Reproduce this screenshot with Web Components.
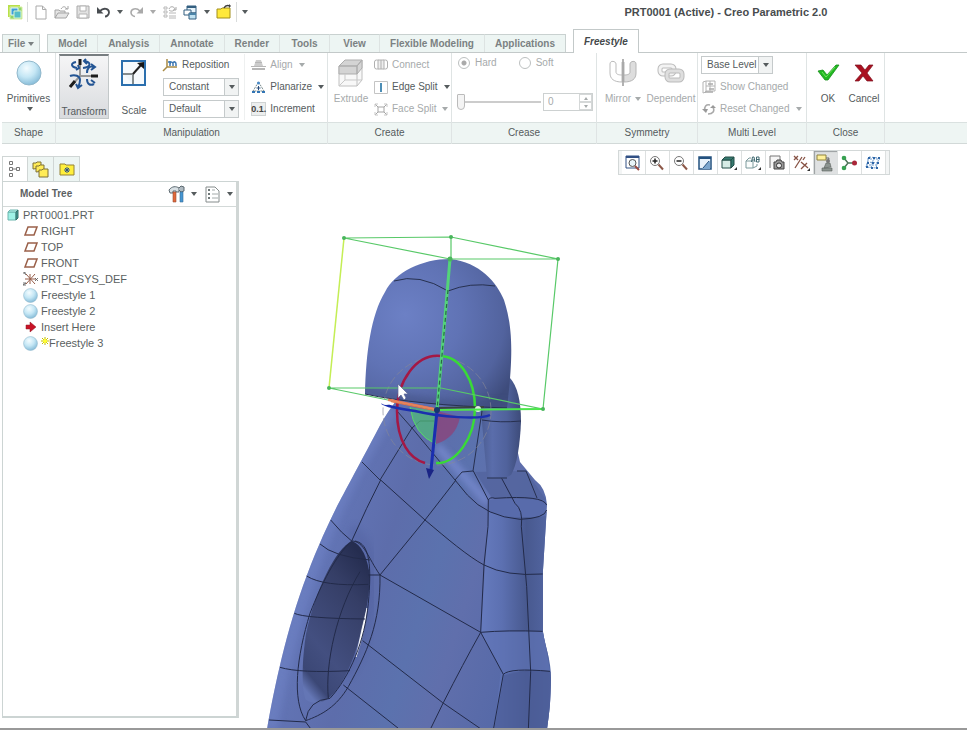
<!DOCTYPE html>
<html lang="en">
<head>
<meta charset="utf-8">
<title>PRT0001 (Active) - Creo Parametric 2.0</title>
<style>
html,body{margin:0;height:100%;background:#fff}
body{font:10px/12px "Liberation Sans",Arial,sans-serif;color:#555b5d;overflow:hidden}
</style>
</head>
<body>
<creo-app></creo-app>
<script>
const ICONS = {
logo:['0 0 16 16',16,16,'<path d="M1 1h12v12H1z" fill="#b8e04a"/><path d="M3 3h12v12H3z" fill="#8fd46a" stroke="#d8f0a0"/><path d="M4 4h7v7H4z" fill="#3d9fd8" stroke="#e8f8ff"/><path d="M7 7h7v7H7z" fill="#54bdc9" stroke="#d7f4cc"/>'],
file:['0 0 12 15',12,15,'<path d="M1 1h6.500l3.500 3.500v9.500H1z" fill="#fff" stroke="#aaa"/><path d="M7.500 1v3.500H11" fill="none" stroke="#aaa"/>'],
open:['0 0 16 15',16,15,'<path d="M1 13V5h4l1 1h5v2M1 13l3-5h11l-3 5z" fill="#e4e4e4" stroke="#a4a4a4"/><path d="M7 4c2-3 4-3 6 0m1-3v3h-3" fill="none" stroke="#a4a4a4"/>'],
save:['0 0 14 14',14,14,'<path d="M1 1h12v12H1z" fill="#e2e2e2" stroke="#aaa"/><path d="M4 1h6v5H4zM3 9h8v4H3z" fill="#fff" stroke="#b4b4b4"/>'],
undo:['0 0 15 12',15,12,'<path d="M4 5c4-4 9-2 9 1.500 0 2-2 4-4 4" fill="none" stroke="#484c50" stroke-width="1.800"/><path d="M1 1v6.500h6.500z" fill="#484c50"/>'],
redo:['0 0 15 12',15,12,'<path d="M11 5C7 1 2 3 2 6.500c0 2 2 4 4 4" fill="none" stroke="#aaa" stroke-width="1.600"/><path d="M14 1v6.500H7.500z" fill="#aaa"/>'],
regen:['0 0 14 14',14,14,'<path d="M1 2h3v2H1zM1 6h3v2H1zM1 10h3v2H1zM6 8h7M6 11h7M6 13h7" fill="none" stroke="#b8b8b8"/><path d="M6 4c1-3 5-3 6 0m1-2v3h-3M12 4c-1 2-4 3-6 1" fill="none" stroke="#a8a8a8"/>'],
windows:['0 0 15 15',15,15,'<path d="M4 1h9v7H4z" fill="#e8f4fb" stroke="#335f80"/><path d="M4 1h9v2H4z" fill="#335f80"/><path d="M1 5h7v5H1z" fill="#fff" stroke="#335f80"/><path d="M6 8h7v6H6z" fill="#bfe1f1" stroke="#335f80"/><path d="M6 8h7v2H6z" fill="#4b84a8"/>'],
closefolder:['0 0 16 16',16,16,'<path d="M1 14V5h4l1-1h8v10z" fill="#ffe93b" stroke="#a28f1c"/><path d="M8 4c1-2 3-3 6-2" stroke="#3d3d3d" fill="none" stroke-width="1.500"/><path d="M13 0l2 2-2 2z" fill="#444"/>'],
sphere:['0 0 26 26',26,26,'<defs><radialGradient id="s" cx=".4" cy=".3" r=".75"><stop offset="0" stop-color="#f4fcff"/><stop offset=".5" stop-color="#c5e7f5"/><stop offset="1" stop-color="#7fb7d5"/></radialGradient></defs><circle cx="13" cy="13" r="12" fill="url(#s)" stroke="#93b9cc"/>'],
transform:['0 0 30 30',30,30,'<path d="M11 3v14h16M11 17L3 26" fill="none" stroke="#999" stroke-width="2"/><path d="M11 0v6M22 17h7M1 28l5-6" stroke="#1d1d1d" stroke-width="3"/><path d="M7 3C1 4 2 8 8 9m7-7c8 1 7 6-1 7m-5-3 1 3-3 2M17 0l-2 2 3 3" fill="none" stroke="#245594" stroke-width="2"/><path d="M25 8c-5-2-7 2-7 6m0 6c0 5 3 7 7 5M22 5l4 3-4 3m0 10 4 3" fill="none" stroke="#245594" stroke-width="2"/><path d="M1 17c5-2 10 0 10 4 0 3-1 5-2 8m-2-4 2 4 4-3" fill="none" stroke="#245594" stroke-width="2"/>'],
scale:['0 0 26 26',26,26,'<path d="M1 1h23v24H1z" fill="#f6fafd" stroke="#2b6fae" stroke-width="2"/><path d="M2 14h10v10" fill="#eef5fa" stroke="#848b8d" stroke-width="2"/><path d="M12 14L20 5" stroke="#222" stroke-width="2"/><path d="M23 2v7l-7-6z" fill="#161616"/>'],
reposition:['0 0 15 13',15,13,'<path d="M4 0v8h10M4 8L0 12" fill="none" stroke="#a88b45" stroke-width="1.500"/><path d="M7 7V2m0 3c1-3 3-2 3 0v2m0-3c1-2 3-1 3 1v2M5 3h3" fill="none" stroke="#3c77b3" stroke-width="1.500"/>'],
align:['0 0 15 12',15,12,'<path d="M5 1h5l2 6H3z" fill="#ccc"/><path d="M0 7h15v1H0zM1 9h13v2H1zM4 3h7v1H4z" fill="#b7b7b7"/>'],
planarize:['0 0 15 13',15,13,'<path d="M7.500 1L2 10h11z" fill="none" stroke="#788" stroke-dasharray="2 1"/><path d="M1 11h13" stroke="#3275b5" stroke-width="2" stroke-dasharray="3 2"/><path d="M7.500 5v4M5.500 7h4" stroke="#294c7b"/><circle cx="7.500" cy="2" r="1.500" fill="#4b8bc8"/>'],
extrude:['0 0 26 30',26,30,'<path d="M1 8h18v20H1zM19 8l5-6v20l-5 6" fill="#f8f8f8" stroke="#c0c0c0"/><path d="M1 8l6-6h17l-5 6zM1 8h18v8H1zM19 8l5-6v8l-5 6z" fill="#d4d4d4" stroke="#adadad"/><path d="M7 16v6h17M7 22l-6 6" fill="none" stroke="#c9c9c9"/>'],
connect:['0 0 14 12',14,12,'<rect x=".5" y="1" width="5" height="9" rx="2" fill="none" stroke="#b0b0b0"/><rect x="8.500" y="1" width="5" height="9" rx="2" fill="none" stroke="#b0b0b0"/><path d="M4 1h6v9H4zM7 1v9" fill="#eee" stroke="#b0b0b0"/>'],
edgesplit:['0 0 14 13',14,13,'<path d="M.5.5h13v12H.5z" fill="#fff" stroke="#c4c4c4"/><path d="M7 2v9" stroke="#4d8eb6" stroke-width="2"/>'],
facesplit:['0 0 14 13',14,13,'<path d="M4 4h6v5H4zM1 1l3 3M13 1l-3 3M1 12l3-3M13 12l-3-3" fill="none" stroke="#a5a5a5"/><path d="M1 4V1h3M10 1h3v3M1 9v3h3M10 12h3V9" fill="none" stroke="#c6c6c6"/>'],
mirror:['0 0 28 30',28,30,'<path d="M13 4v20C5 24 1 21 1 15V6c0-4 6-3 6 0v8c0 2 2 3 6 3" fill="#fff" stroke="#bbb"/><path d="M15 4v20c8 0 12-3 12-9V6c0-4-6-3-6 0v8c0 2-2 3-6 3" fill="#ddd" stroke="#b5b5b5"/><path d="M14 1v27" stroke="#999" stroke-width="1.500"/>'],
dependent:['0 0 28 22',28,22,'<g fill="none" stroke="#bbb"><rect x="3" y="4" width="14" height="8" rx="3" stroke-width="5"/><rect x="3" y="4" width="14" height="8" rx="3" stroke="#f3f3f3" stroke-width="3"/><rect x="10" y="9" width="15" height="9" rx="3" stroke-width="5"/><rect x="10" y="9" width="15" height="9" rx="3" stroke="#dedede" stroke-width="3"/></g>'],
show:['0 0 14 14',14,14,'<path d="M1 2l3-1v11l-3 1zM4 1h9v10H4M4 6h9M8 1v10" fill="none" stroke="#b4b4b4"/><path d="M6 4h5M7 9h5M3 12h8" stroke="#aaa" stroke-width="1.500"/>'],
reset:['0 0 14 13',14,13,'<path d="M8 2C4 1 2 4 3 7M6 11c5 0 7-3 5-7" fill="none" stroke="#aaa" stroke-width="1.600"/><path d="M0 6h6l-2 4zM8 5h6l-3-3z" fill="#999"/>'],
ok:['0 0 22 18',22,18,'<path d="M1 7l5-1 4 5L19 1h3L11 16H8z" fill="#22b922" stroke="#178d1b" stroke-width=".8"/><path d="M5 8l4 5L18 3" fill="none" stroke="#6ee35d"/>'],
cancel:['0 0 20 18',20,18,'<path d="M1 1h6l4 5 4-5h4l-6 8 6 8h-6l-4-5-4 5H1l7-8z" fill="#aa1020" stroke="#7d1220" stroke-width=".7"/>'],
tree:['0 0 14 18',14,18,'<path d="M1.500 1.500h3v3h-3zM1.500 7.500h3v3h-3zM1.500 13.500h3v3h-3zM8.500 7.500h3v3h-3z" fill="#fff" stroke="#777"/><path d="M5 9h3" stroke="#777"/>'],
folders:['0 0 17 17',17,17,'<g fill="#ffec57" stroke="#7e7137"><path d="M1 8V2h3l1-1h4v6z"/><path d="M4 11V5h3l1-1h4v6z"/><path d="M7 16V9h3l1-1h5v8z"/></g>'],
favorite:['0 0 16 14',16,14,'<path d="M1 13V2h5l1 1h8v10z" fill="#ffef3c" stroke="#948236"/><path d="M8 5v6M5 8h6M6 6l4 4M10 6l-4 4" stroke="#2b5288"/>'],
tools:['0 0 17 18',17,18,'<path d="M1 5c3-4 7-4 10-2v4H8V6H5v2H2z" fill="#d8e0e4" stroke="#5c6970"/><path d="M11 3l2-2 3 1v4l-3 1-2-2" fill="#aeb9c0" stroke="#5c6970"/><path d="M5 7h3v10H5z" fill="#e2693a" stroke="#994d38" stroke-width=".6"/><path d="M12 7h3v10h-3z" fill="#4696d2" stroke="#356c98" stroke-width=".6"/>'],
settings:['0 0 15 17',15,17,'<path d="M1 1h9l4 4v11H1z" fill="#fff" stroke="#858c8c"/><path d="M3 4h2M3 8h2M3 12h2" stroke="#6e7777" stroke-width="2"/><path d="M7 4h3M7 8h6M7 12h6" stroke="#a3aaaa"/>'],
part:['0 0 12 12',12,12,'<path d="M1 3h8v8H1z" fill="#9ff2e7" stroke="#6cb5ae"/><path d="M1 3l2-2h8L9 3z" fill="#b9f7ef" stroke="#6cb5ae"/><path d="M9 3l2-2v8l-2 2z" fill="#3e9c95" stroke="#356f6b"/>'],
plane:['0 0 14 10',14,10,'<path d="M4 1h9l-3 8H1z" fill="#fff" stroke="#9a6049" stroke-width="1.500"/>'],
csys:['0 0 15 14',15,14,'<path d="M7 2v10M2 7h11M3 2l9 10M12 2L3 12" stroke="#965c48"/><path d="M0 1h3M1 0l2 3M12 6l3 3M15 6l-3 3M0 11h3l-3 2h3" stroke="#555" fill="none" stroke-width=".8"/>'],
insert:['0 0 12 10',12,10,'<path d="M1 3h4V0l6 5-6 5V7H1z" fill="#c91327" stroke="#8c1824" stroke-width=".5"/>'],
star:['0 0 8 8',8,8,'<path d="M4 0v8M0 4h8M1 1l6 6M7 1L1 7" stroke="#c5bc00"/><circle cx="4" cy="4" r="2" fill="#ffff2e"/>'],
vfit:['0 0 16 16',16,16,'<path d="M1 1h13v12H1z" fill="#fff" stroke="#315084"/><path d="M1 1h13v2H1z" fill="#315084"/><circle cx="7.500" cy="8" r="3.500" fill="#e9f5fa" stroke="#555"/><path d="M10 11l4 4" stroke="#994b43" stroke-width="2"/>'],
vin:['0 0 16 16',16,16,'<circle cx="6" cy="6" r="4.500" fill="#fff" stroke="#777"/><path d="M3.500 6h5M6 3.500v5" stroke="#222" stroke-width="1.500"/><path d="M9.500 9.500l4.500 5" stroke="#8c5747" stroke-width="2"/>'],
vout:['0 0 16 16',16,16,'<circle cx="6" cy="6" r="4.500" fill="#fff" stroke="#777"/><path d="M3.500 6h5" stroke="#222" stroke-width="1.500"/><path d="M9.500 9.500l4.500 5" stroke="#8c5747" stroke-width="2"/>'],
vpaint:['0 0 14 14',14,14,'<path d="M1 1h12v12H1z" fill="#e7f2fa" stroke="#23517f" stroke-width="1.500"/><path d="M1 1h12v2H1z" fill="#23517f"/><path d="M4 13c2-1 3-5 8-8v8z" fill="#7ba6cd"/><path d="M5 12l6-7" stroke="#23517f"/>'],
vcube:['0 0 16 16',16,16,'<path d="M1 5h9v8H1z" fill="#d7ece6" stroke="#254e49"/><path d="M1 5l3-3h9l-3 3zM10 5l3-3v8l-3 3z" fill="#377b70" stroke="#254e49"/><path d="M13 15h3v-3z" fill="#333"/>'],
vsaved:['0 0 16 16',16,16,'<path d="M1 6h7v7H1zM1 6l3-3h2M8 13l4-2V9" fill="#fafdfc" stroke="#7d9a9c"/><path d="M6.500 7l1-5h1.500l1 5M7 5h3M11.500 2h2.500v5h-2.500zM11.500 4.500h3" fill="none" stroke="#416b72"/><path d="M13 15h3v-3z" fill="#333"/>'],
vcamera:['0 0 16 16',16,16,'<path d="M1 13V1h10v5" fill="#f6f6f6" stroke="#777"/><path d="M5 7h2l1-2h4l1 2h2v7H5z" fill="#999" stroke="#444"/><circle cx="10" cy="10.500" r="2.500" fill="#eee" stroke="#333"/>'],
vaxes:['0 0 17 16',17,16,'<path d="M1 1l4 4M5 1L1 5M2 13L9 2M10 5l2-3M8 7l7 6M14 8l-6 6" fill="none" stroke="#875345" stroke-width="1.300"/><path d="M14 16h3v-3z" fill="#333"/>'],
vannot:['0 0 18 18',18,18,'<path d="M1 1h9v5H1z" fill="#fff19b" stroke="#8e823e"/><path d="M10 4h3l-1 4" fill="none" stroke="#666"/><circle cx="12" cy="7" r="2" fill="#777"/><path d="M10 9h4l1 4-7 1zM6 14h10v3H6z" fill="#8c9490" stroke="#59605c" stroke-width=".6"/>'],
vspin:['0 0 17 16',17,16,'<path d="M3 3l4 5-4 5M7 8h7" fill="none" stroke="#4d7459" stroke-width="1.500"/><circle cx="3" cy="3" r="2.300" fill="#37a152"/><circle cx="3" cy="13" r="2.300" fill="#37a152"/><circle cx="13.500" cy="8" r="2.500" fill="#aa2639"/>'],
vmesh:['0 0 16 16',16,16,'<path d="M4 2l10 1-3 10L1 12zM2 7l11 1M9 2L6 13M2 4h13M1 10h12" fill="none" stroke="#6d99cb" stroke-dasharray="2 1"/><path d="M3 3h2M8 3h2M13 3h2M2 8h2M7 8h2M12 8h2M1 12h2M6 13h2M11 13h2" stroke="#2e66a7" stroke-width="2"/>']
};
const def = (name, html, wire) => {
  const t = document.createElement('template'); t.innerHTML = html;
  customElements.define(name, class extends HTMLElement {
    constructor(){ super(); this.attachShadow({mode:'open'}); }
    connectedCallback(){
      if (this.shadowRoot.childNodes.length) return;
      this.shadowRoot.append(t.content.cloneNode(true));
      if (wire) wire(this, this.shadowRoot);
    }
  });
};
const icon = (name, size) => {
  const i = document.createElement('ui-icon'); i.setAttribute('name', name);
  if (size) i.setAttribute('size', size);
  return i;
};
def('ui-icon', '<style>:host{display:inline-flex;flex:none}svg{display:block;overflow:visible}</style><span></span>', (el, r) => {
  const [vb,w,h,body] = ICONS[el.getAttribute('name')];
  const s = el.getAttribute('size');
  r.querySelector('span').innerHTML = `<svg viewBox="${vb}" width="${s||w}" height="${s||h}" fill="none" aria-hidden="true">${body}</svg>`;
});
def('drop-caret', '<style>:host{display:inline-block;flex:none;border:3px solid transparent;border-top:4px solid currentColor;border-bottom:0}</style>');

/* Ribbon command: "large" puts the icon over the text, otherwise a row */
def('tool-button', `<style>
:host{display:flex;flex:none}
button{all:unset;box-sizing:border-box;display:flex;align-items:center;gap:4px;white-space:nowrap;cursor:default;height:22px}
:host([disabled]) button{color:#a6aaab}
.ic{display:flex;justify-content:center;align-items:center}
:host([large]) button{flex-direction:column;gap:0;height:65px;width:100%;justify-content:flex-start;border:1px solid transparent}
:host([large]) .ic{height:36px}
:host([large]) .tx{padding-top:2px;display:flex;gap:2px;align-items:center}
:host([low]) .tx{padding-top:14px}
:host([pressed]) button{border-color:#c3c8c9;border-top:2px solid #777d80;background:linear-gradient(#f5f5f6,#d9dbde)}
:host(:not([large])) .ic{min-width:15px}
drop-caret{color:inherit;margin-left:2px}
:host([stack]) .tx{flex-direction:column}
</style><button type="button"><span class="ic"></span><span class="tx"><slot></slot></span></button>`, (el, r) => {
  r.querySelector('.ic').append(icon(el.getAttribute('icon')));
  const b = r.querySelector('button');
  if (el.hasAttribute('caret')) (el.hasAttribute('large') ? r.querySelector('.tx') : b).append(document.createElement('drop-caret'));
  if (el.hasAttribute('disabled')) b.disabled = true;
  if (el.hasAttribute('pressed')) b.setAttribute('aria-pressed','true');
});
def('icon-button', `<style>
:host{display:flex;flex:none}
button{all:unset;display:flex;align-items:center;justify-content:center;width:100%;height:100%}
</style><button type="button"></button>`, (el, r) => {
  const b = r.querySelector('button'), name = el.getAttribute('icon');
  b.setAttribute('aria-label', el.getAttribute('label') || name);
  b.append(icon(name));
});
def('drop-select', `<style>
:host{display:grid;grid-template-columns:1fr 14px;height:18px;box-sizing:border-box;border:1px solid #c5cacb;background:#fff}
select{all:unset;grid-area:1/1/2/3;font:inherit;color:inherit;padding-left:5px;line-height:16px}
i{grid-area:1/2;border-left:1px solid #c5cacb;background:#f1f3f3;display:flex;align-items:center;justify-content:center;pointer-events:none}
</style><select><option></option></select><i><drop-caret></drop-caret></i>`, (el, r) => {
  r.querySelector('option').textContent = el.getAttribute('value');
  r.querySelector('select').setAttribute('aria-label', el.getAttribute('label'));
});
def('ribbon-tab', `<style>
:host{display:flex;flex:none;justify-content:center;min-width:50px;height:18px;box-sizing:border-box;border-top:1px solid #c9d1d0;border-right:1px solid #dde3e2;background:#edf5f3;color:#7b8182}
:host([first]){border-left:1px solid #c9d1d0}
:host([last]){border-right-color:#c9d1d0}
:host([compact]){min-width:38px}
:host([compact]) button{padding:0 5px}
:host([active]){height:24px;background:#fff;color:#45494b;border:1px solid #c3c9c9;border-bottom:0;font-style:italic;margin-bottom:-1px}
button{all:unset;display:flex;align-items:center;gap:3px;font:inherit;font-weight:bold;padding:0 10px;white-space:nowrap}
</style><button type="button" role="tab"><slot></slot></button>`);
def('ribbon-group', `<style>
:host{display:flex;flex:none;flex-direction:column;box-sizing:border-box;border-right:1px solid #dfe4e4}
.body{flex:1;display:flex;align-items:flex-start;padding:1px 3px 0;box-sizing:border-box}
.name{height:20px;line-height:20px;text-align:center;background:#eef5f3;border-top:1px solid #dae1e0;border-bottom:1px solid #d2d9d8}
</style><div class="body"><slot></slot></div><div class="name"></div>`, (el, r) => { r.querySelector('.name').textContent = el.getAttribute('name'); });
def('tree-item', `<style>
:host{display:flex;align-items:center;height:16px;gap:3px;padding-left:20px;font-size:11px;color:#5a5f61}
:host([root]){padding-left:2px}
.ic{width:15px;display:flex;justify-content:center}
</style><span class="ic"></span><slot></slot>`, (el, r) => {
  const n = el.getAttribute('icon');
  r.querySelector('.ic').append(icon(n, n === 'sphere' ? '15' : ''));
});
def('quick-bar', `<style>
:host{display:flex;align-items:center;height:24px;padding-left:4px;flex:none}
icon-button{width:21px;height:20px}
.pad{width:12px;display:flex;justify-content:center}
.sep{width:1px;height:20px;background:#d9dcdc;margin:0 2px}
h1{font-size:11px;line-height:14px;margin:0 14.500% 0 auto;color:#484c4e;white-space:nowrap}
.dim{color:#aaa}
</style>
<icon-button icon="logo"></icon-button><span class="sep"></span><icon-button icon="file" label="New"></icon-button><icon-button icon="open"></icon-button><icon-button icon="save"></icon-button><icon-button icon="undo"></icon-button><span class="pad"><drop-caret></drop-caret></span><icon-button icon="redo"></icon-button><span class="pad dim"><drop-caret></drop-caret></span><icon-button icon="regen" label="Regenerate"></icon-button><icon-button icon="windows"></icon-button><span class="pad"><drop-caret></drop-caret></span><icon-button icon="closefolder" label="Close"></icon-button><span class="sep"></span><span class="pad"><drop-caret></drop-caret></span>
<h1>PRT0001 (Active) - Creo Parametric 2.0</h1>`);
def('ribbon-tabs', `<style>
:host{display:flex;align-items:flex-end;height:29px;padding-left:2px;border-bottom:1px solid #c3c9c9;flex:none;box-sizing:border-box}
.gap{width:7px}
</style>
<ribbon-tab first last compact>File <drop-caret></drop-caret></ribbon-tab><span class="gap"></span>
<ribbon-tab first>Model</ribbon-tab><ribbon-tab>Analysis</ribbon-tab><ribbon-tab>Annotate</ribbon-tab><ribbon-tab>Render</ribbon-tab><ribbon-tab>Tools</ribbon-tab><ribbon-tab>View</ribbon-tab><ribbon-tab>Flexible Modeling</ribbon-tab><ribbon-tab last>Applications</ribbon-tab><span class="gap"></span><ribbon-tab active>Freestyle</ribbon-tab>`);
def('crease-controls', `<style>
:host{display:flex;flex-direction:column;gap:22px;width:100%;color:#a6aaab;padding-top:1px}
.radios{display:flex;gap:22px;padding-left:3px}
label{display:flex;gap:5px;align-items:center;height:16px}
input[type=radio]{appearance:none;margin:0;width:12px;height:12px;border:1px solid #bcc0c0;border-radius:50%}
input[type=radio]:checked{background:radial-gradient(#aaa 0 2px,#fff 3px)}
.line{display:flex;gap:2px;align-items:center;padding-left:2px}
input[type=range]{appearance:none;margin:0;width:84px;height:18px;background:linear-gradient(#ccc,#ccc) center/100% 2px no-repeat}
input[type=range]::-webkit-slider-thumb{appearance:none;width:8px;height:16px;border:1px solid #bbb;background:#f4f4f4;border-radius:1px 1px 4px 4px}
.num{display:grid;grid-template-columns:35px 13px;grid-template-rows:8px 8px;border:1px solid #cdd1d1}
.num input{all:unset;grid-row:1/3;width:31px;padding-left:4px}
.num button{all:unset;border:1px solid #d5d8d8;display:flex;align-items:center;justify-content:center;box-sizing:border-box}
.num button:first-of-type drop-caret{transform:rotate(180deg)}
.num drop-caret{border-width:3px 2px 0}
</style><div class="radios"><label><input type="radio" name="c" checked disabled>Hard</label><label><input type="radio" name="c" disabled>Soft</label></div>
<div class="line"><input type="range" value="0" disabled aria-label="Crease value"><span class="num"><input type="text" value="0" disabled aria-label="Crease amount"><button type="button" disabled aria-label="Increase"><drop-caret></drop-caret></button><button type="button" disabled aria-label="Decrease"><drop-caret></drop-caret></button></span></div>`);
def('ribbon-panel', `<style>
:host{display:flex;height:91px;padding-left:2px;flex:none}
.col{display:flex;flex-direction:column}
.col drop-select{margin:2px 0}
.fields{width:78px;margin:0 6px 0 4px;padding-right:5px;border-right:1px solid #eef0f0}
.rest{flex:1;display:flex;flex-direction:column;justify-content:flex-end}
.rest div{height:20px;background:#eef5f3;border-top:1px solid #dae1e0;border-bottom:1px solid #d2d9d8}
.g1{width:54px}.g2{width:272px}.g3{width:124px}.g4{width:145px}.g5{width:101px}.g6{width:109px}.g7{width:78px}
.s{width:47px}.w{width:50px}.n{width:40px;margin-right:2px}.m{width:46px}.g{width:36px}
.level{width:72px}
</style>
<ribbon-group class="g1" name="Shape"><tool-button large stack caret icon="sphere" class="s">Primitives</tool-button></ribbon-group>
<ribbon-group class="g2" name="Manipulation"><tool-button large low pressed icon="transform" class="w">Transform</tool-button><tool-button large low icon="scale" class="w">Scale</tool-button>
<div class="col fields"><tool-button icon="reposition">Reposition</tool-button><drop-select value="Constant" label="Falloff"></drop-select><drop-select value="Default" label="Drag mode"></drop-select></div>
<div class="col"><tool-button disabled caret icon="align">Align</tool-button><tool-button caret icon="planarize">Planarize</tool-button><increment-button></increment-button></div></ribbon-group>
<ribbon-group class="g3" name="Create"><tool-button large disabled icon="extrude" class="n">Extrude</tool-button><div class="col"><tool-button disabled icon="connect">Connect</tool-button><tool-button caret icon="edgesplit">Edge Split</tool-button><tool-button disabled caret icon="facesplit">Face Split</tool-button></div></ribbon-group>
<ribbon-group class="g4" name="Crease"><crease-controls></crease-controls></ribbon-group>
<ribbon-group class="g5" name="Symmetry"><tool-button large disabled caret icon="mirror" class="m">Mirror</tool-button><tool-button large disabled icon="dependent" class="w">Dependent</tool-button></ribbon-group>
<ribbon-group class="g6" name="Multi Level"><div class="col"><drop-select class="level" value="Base Level" label="Level"></drop-select><tool-button disabled icon="show">Show Changed</tool-button><tool-button disabled caret icon="reset">Reset Changed</tool-button></div></ribbon-group>
<ribbon-group class="g7" name="Close"><tool-button large icon="ok" class="g">OK</tool-button><tool-button large icon="cancel" class="g">Cancel</tool-button></ribbon-group>
<div class="rest"><div></div></div>`);
def('increment-button', `<style>:host{display:flex}button{all:unset;height:22px;display:flex;align-items:center;gap:4px}
b{font-size:9px;line-height:12px;background:#eceeee;border:1px solid #cfd3d3;color:#444;width:13px;display:flex;justify-content:center}</style><button type="button"><b>0.1.</b>Increment</button>`);
def('model-tree', `<style>
:host{display:flex;flex-direction:column;width:239px;flex:none;padding:12px 0 10px 2px;box-sizing:border-box}
nav{display:flex;height:25px}
nav icon-button{width:26px;box-sizing:border-box;border:1px solid #d0d6d5;border-left:0;border-bottom:0;background:#edf5f3}
nav icon-button:first-child{border-left:1px solid #d0d6d5;background:#fff}
section{flex:1;border:1px solid #ccd4d3;border-right:3px solid #d0d6d5;border-bottom-width:2px;background:#fff}
header{display:flex;align-items:center;height:24px;border-bottom:1px solid #d3d9d8;padding:0 3px 0 17px;gap:4px}
h2{font-size:10px;margin:0 auto 0 0;color:#5c6163}
header icon-button{width:22px;height:22px}
.new{display:flex}
</style><nav><icon-button icon="tree" label="Model Tree"></icon-button><icon-button icon="folders" label="Folder Browser"></icon-button><icon-button icon="favorite" label="Favorites"></icon-button></nav>
<section><header><h2>Model Tree</h2><icon-button icon="tools"></icon-button><drop-caret></drop-caret><icon-button icon="settings"></icon-button><drop-caret></drop-caret></header>
<tree-item root icon="part">PRT0001.PRT</tree-item><tree-item icon="plane">RIGHT</tree-item><tree-item icon="plane">TOP</tree-item><tree-item icon="plane">FRONT</tree-item><tree-item icon="csys">PRT_CSYS_DEF</tree-item><tree-item icon="sphere">Freestyle 1</tree-item><tree-item icon="sphere">Freestyle 2</tree-item><tree-item icon="insert">Insert Here</tree-item><tree-item icon="sphere"><span class="new"><ui-icon name="star"></ui-icon>Freestyle 3</span></tree-item></section>`);
def('view-bar', `<style>
:host{display:flex;height:25px;box-sizing:border-box;border:1px solid #d3d8d8;padding:0 3px;background:#f3f5f5;flex:none;align-self:flex-start;margin:6px 0 0 52%}
icon-button{width:24px;box-sizing:border-box;background:#fff;border-right:1px solid #dde0e0}
icon-button[pressed]{background:#dfe1e2;box-shadow:inset 1px 1px 1px #9a9ea0}
icon-button:first-child{border-left:1px solid #dde0e0}
</style><icon-button icon="vfit" label="Refit"></icon-button><icon-button icon="vin" label="Zoom In"></icon-button><icon-button icon="vout" label="Zoom Out"></icon-button><icon-button icon="vpaint" label="Repaint"></icon-button><icon-button icon="vcube" label="Display Style"></icon-button><icon-button icon="vsaved" label="Saved Orientations"></icon-button><icon-button icon="vcamera" label="View Manager"></icon-button><icon-button icon="vaxes" label="Datum Display"></icon-button><icon-button pressed icon="vannot" label="Annotation Display"></icon-button><icon-button icon="vspin" label="Spin Center"></icon-button><icon-button icon="vmesh" label="Mesh Display"></icon-button>`);
def('model-view', `<style>
:host{display:flex;flex-direction:column;flex:1;min-width:0}
svg{display:block;flex:1;min-height:0;width:100%}
</style><view-bar></view-bar>
<svg viewBox="239 175 728 553" preserveAspectRatio="xMinYMin meet" role="img" aria-label="Freestyle model with control box">
<defs>
<linearGradient id="body" gradientUnits="userSpaceOnUse" x1="300" y1="560" x2="550" y2="640"><stop offset="0" stop-color="#6477b9"/><stop offset=".3" stop-color="#5d6dab"/><stop offset=".5" stop-color="#5b72ae"/><stop offset=".65" stop-color="#606fac"/><stop offset="1" stop-color="#5267a6"/></linearGradient>
<linearGradient id="side" x1="0" x2="1"><stop offset="0" stop-color="#667bbe"/><stop offset=".3" stop-color="#5c70b1"/><stop offset=".65" stop-color="#48598f"/><stop offset="1" stop-color="#5467a4"/></linearGradient>
<radialGradient id="head" gradientUnits="userSpaceOnUse" cx="405" cy="315" r="125"><stop offset="0" stop-color="#6c80c5"/><stop offset=".45" stop-color="#6073b5"/><stop offset=".8" stop-color="#52639e"/><stop offset="1" stop-color="#3e4c7c"/></radialGradient>
<linearGradient id="finger" x1="0" x2="1"><stop offset="0" stop-color="#4a5b8f"/><stop offset=".3" stop-color="#5a6dab"/><stop offset=".65" stop-color="#50629c"/><stop offset="1" stop-color="#3d4b79"/></linearGradient>
<linearGradient id="hole" x1=".7" y1="0" x2=".2" y2="1"><stop offset="0" stop-color="#252d50"/><stop offset=".25" stop-color="#353e66"/><stop offset=".7" stop-color="#434f80"/><stop offset=".9" stop-color="#3b4775"/><stop offset="1" stop-color="#6476b5"/></linearGradient>
<filter id="soft"><feGaussianBlur stdDeviation="3"/></filter>
<clipPath id="bc"><path id="bp" d="M267 729C274 690 286 630 307 575C322 535 338 504 343 495C352 478 365 454 375 435Q384 417 393 405L400 395H505L520 462L535 480Q546 488 547 505L543 570V632C546 650 551 660 551 678C551 700 549 715 547 729Z"/></clipPath>
<clipPath id="hc"><path d="M365 394C366 352 371 315 385 292C395 272 422 259 450 259C480 262 497 283 504 300C512 325 514 350 507 408Q435 408 365 394Z"/></clipPath>
</defs>
<use href="#bp" fill="url(#body)"/>
<g clip-path="url(#bc)">
<path d="M392 408C350 474 302 560 270 729" fill="none" stroke="#7285c8" stroke-width="14" opacity=".5" filter="url(#soft)"/>
<path d="M489 506L548 512V635L551 729H494L501 670L481 632Z" fill="url(#side)"/>
<path d="M504 675Q540 668 552 672V730H494Z" fill="#4c5d98" opacity=".75"/>
<path d="M481 632L543 631L550 671Q530 668 504 674Z" fill="#6074b5" opacity=".7"/>
<path d="M437 446L488 503" fill="none" stroke="#788bd0" stroke-width="8" opacity=".8" filter="url(#soft)"/>
<path d="M489 500Q530 497 546 500V516Q515 520 489 512Z" fill="#586bab"/>
<path d="M475 472L526 471L546 500L492 498Z" fill="#53649e" opacity=".8"/>
<path d="M350 530C383 548 374 630 345 675" fill="none" stroke="#4f5e9d" stroke-width="13" opacity=".35" filter="url(#soft)"/>
</g>
<path d="M352 541C336 548 315 590 306 634C302 660 301 690 306 700Q318 707 330 697C350 680 368 622 370 577Q366 546 352 541Z" fill="url(#hole)"/>
<path d="M367 608L362 629L356 657Q365 631 367 608Z" fill="#fff" stroke="#fff" stroke-width=".7"/>
<path d="M510 378Q521 390 521 422C520 445 517 465 511 475L505 478H487L480 400Z" fill="url(#finger)"/>
<g transform="translate(260 480) scale(.33333)" fill="none" stroke="#222a49" stroke-width="3" stroke-linejoin="round">
<path d="M362 0L495 120C560 175 625 230 672 255Q740 290 848 282M362 0L320 85L275 183M588 0L495 120L360 285M585 0L622 45Q680 110 780 118Q855 115 860 90M640 -27L685 60Q690 50 705 55Q850 45 860 75M685 60L684 140L672 255L662 457M725 -5L765 70Q790 90 784 140L800 320L812 575L805 750M212 120Q245 160 275 183M180 192Q220 230 330 240M140 288Q190 320 325 313M103 400Q135 415 315 417M60 562Q120 580 270 572M27 720L137 726L155 750M360 285L662 457L730 583L700 750M662 457Q740 450 848 454M662 457Q610 550 550 668L510 750M730 583Q750 563 870 574M308 482L548 668L660 745M250 615L415 745"/>
<path d="M275 183C225 230 185 310 150 400C110 530 95 660 137 722M275 183C312 183 325 235 360 285C362 430 320 520 265 620C230 680 185 705 137 722M285 183C330 190 335 260 325 370C315 480 270 590 210 655Q145 660 137 722M325 285H360M300 275C230 390 195 550 205 655"/>
</g>
<g fill="none" stroke="#27304f"><path d="M397 411L412 428L455 480M412 428L380 480M362 462L380 480M455 480L462 472L473 471L482 411M517 471H526L537 498M487 478H507M482 420Q500 423 521 421M412 428L420 421H434"/></g>
<path d="M365 394C366 352 371 315 385 292C395 272 422 259 450 259C480 262 497 283 504 300C512 325 514 350 507 408Q435 408 365 394Z" fill="url(#head)"/>
<g clip-path="url(#hc)"><path d="M512 290V415" stroke="#3a4779" stroke-width="24" opacity=".65" filter="url(#soft)"/><path d="M360 390Q430 410 515 407" fill="none" stroke="#435183" stroke-width="13" opacity=".5" filter="url(#soft)"/></g>
<path d="M394 281Q419 273 448 291Q470 282 495 286M365 394Q415 405 507 408" fill="none" stroke="#273150"/>
<path d="M437 411L410 407Q414 435 436 444Z" fill="#50bf78" opacity=".7"/><path d="M437 411L460 417Q456 438 436 444Z" fill="#953b70" opacity=".65"/><path d="M410 407Q414 435 436 444" fill="none" stroke="#58d66a"/>
<g fill="none"><circle cx="437" cy="411" r="54" stroke="#858796" stroke-dasharray="8 3" opacity=".65"/>
<path d="M441 356C416 353 397 382 397 411C397 442 410 459 425 463" stroke="#a41845" stroke-width="2.500"/><path d="M441 356C461 357 475 381 475 408C475 438 456 464 436 463" stroke="#39da37" stroke-width="2.500"/>
<path d="M382 403Q387 407 415 411C440 417 480 420 490 415" stroke="#1b2faf" stroke-width="2.500"/>
<path d="M388 400L437 410" stroke="#e86e43" stroke-width="3"/><path d="M388 400L437 410" stroke="#463c5c"/><path d="M437 408L484 407" stroke="#39453f" stroke-width="2"/><path d="M437 411L431 470" stroke="#1a2eb0" stroke-width="3"/></g>
<path d="M426 468L434 470L429 479Z" fill="#1a2485"/><ellipse cx="386" cy="402" rx="5" ry="3" fill="#fff"/><circle cx="478" cy="409" r="3" fill="#def3df"/>
<g fill="none" stroke="#58c968"><path d="M344 238L451 237L558 259L543 409L441 388L329 388L437 410M344 238L450 259L558 259M451 237V259" stroke-width="1.200"/><path d="M344 238L329 388" stroke="#c4ee55" stroke-width="1.500"/><path d="M437 410L543 409" stroke="#4ce64b" stroke-width="2"/><path d="M450 259L437 410" stroke="#53d47a" stroke-width="3"/><path d="M448 290L437 410" stroke="#276b43" stroke-width="1.200" stroke-dasharray="4 3"/></g>
<path d="M388 400L434 409" stroke="#e8825c" stroke-width="2"/>
<g fill="#49b55c"><circle cx="344" cy="238" r="2"/><circle cx="451" cy="237" r="2"/><circle cx="558" cy="259" r="2"/><circle cx="450" cy="259" r="2.500"/><circle cx="329" cy="388" r="2"/><circle cx="543" cy="409" r="2"/></g><circle cx="437" cy="410" r="3" fill="#17366f"/>
<path d="M398 384V398L401 395L404 400L406 398L404 394H408Z" fill="#fff" stroke="#5c6797" stroke-width=".7"/>
</svg>`);
def('creo-app', `<style>
:host{display:flex;flex-direction:column;height:100vh;box-sizing:border-box;border-bottom:2px solid #999}
main{flex:1;display:flex;min-height:0}
</style><quick-bar></quick-bar><ribbon-tabs role="tablist"></ribbon-tabs><ribbon-panel></ribbon-panel><main><model-tree></model-tree><model-view></model-view></main>`);
</script>
</body>
</html>
